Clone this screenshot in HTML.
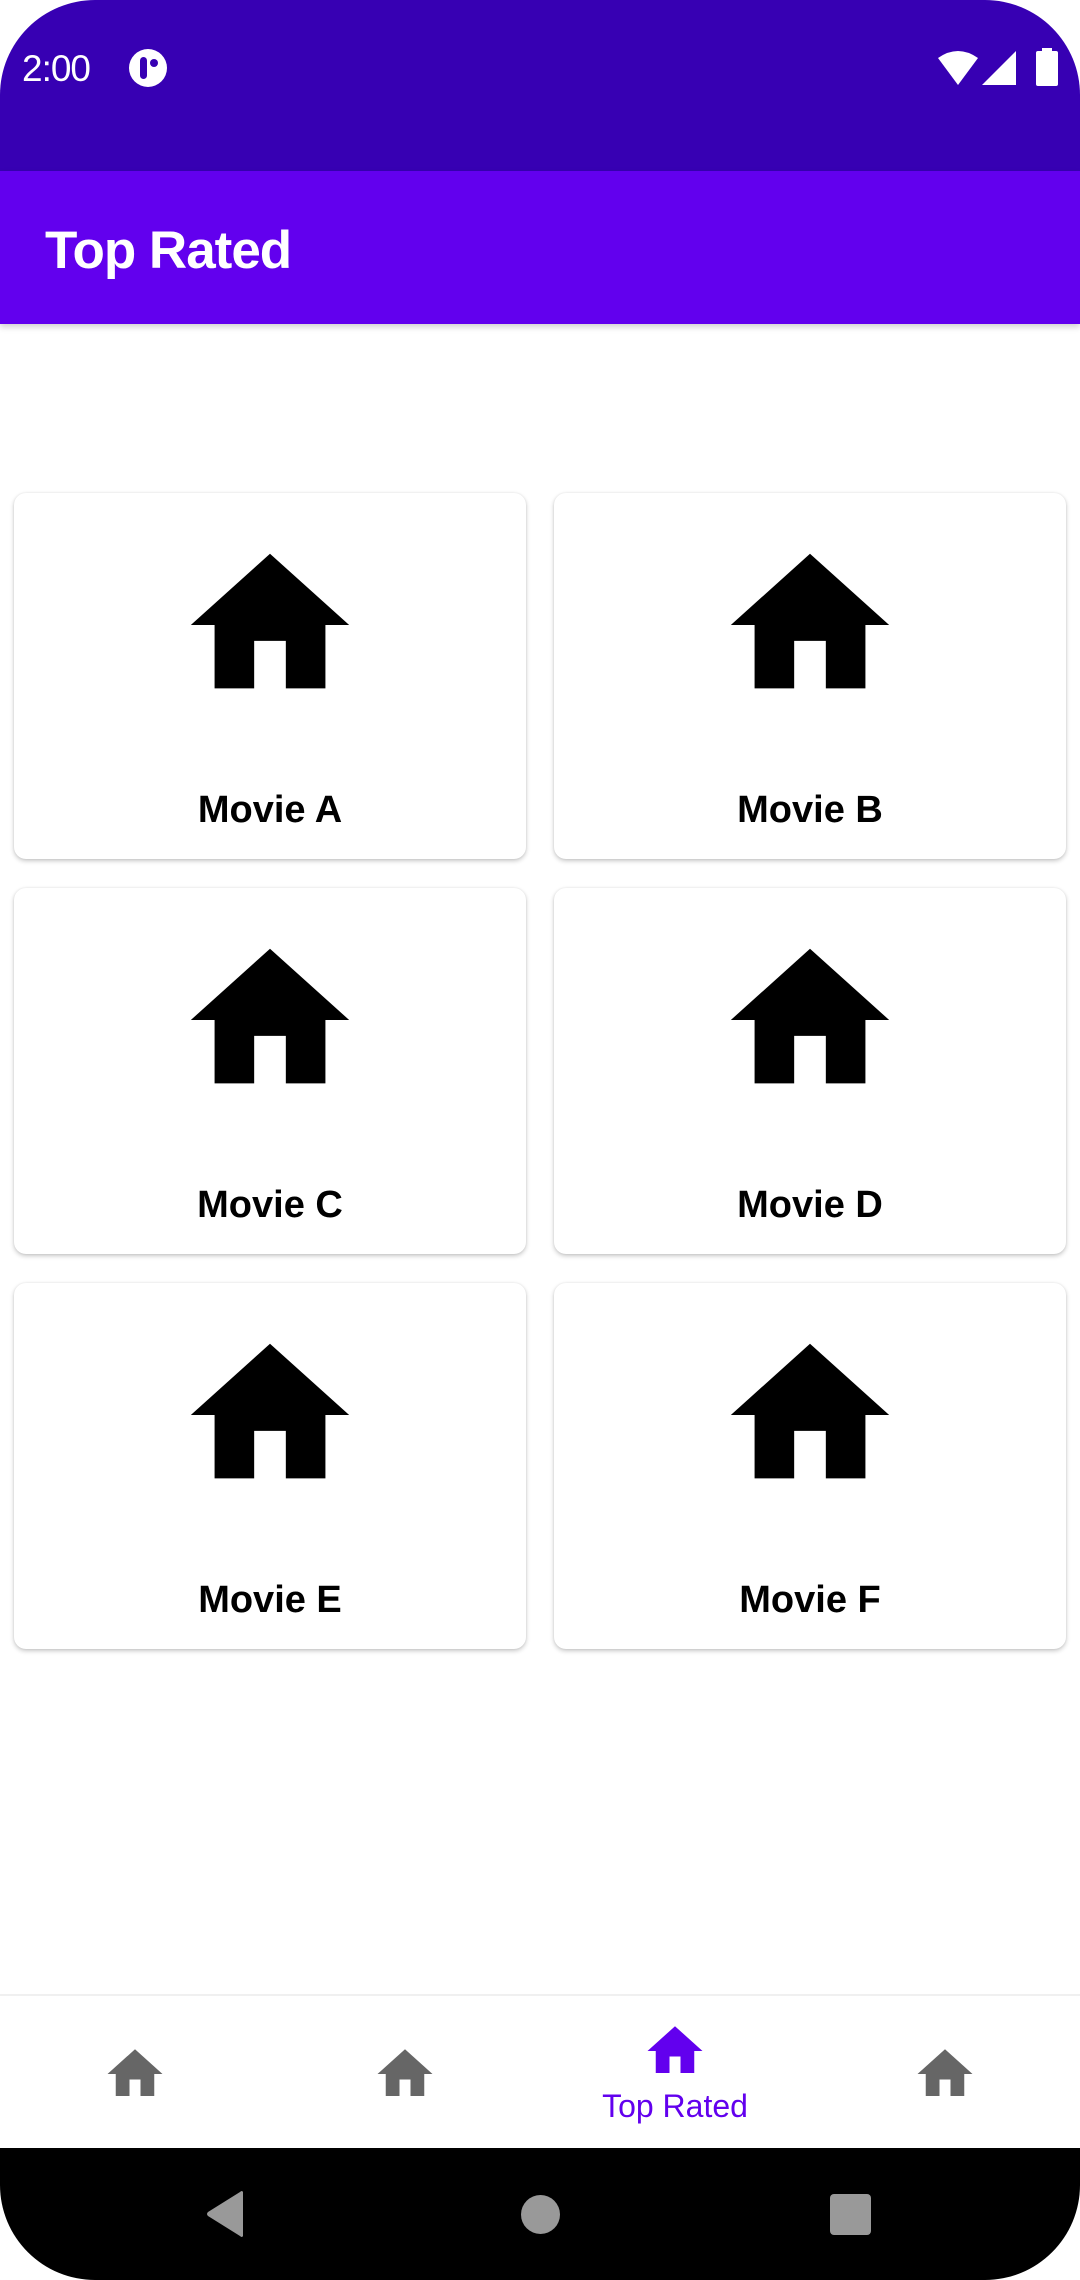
<!DOCTYPE html>
<html><head><meta charset="utf-8"><style>
*{margin:0;padding:0;box-sizing:border-box}
body{width:1080px;height:2280px;overflow:hidden;background:#fff;font-family:"Liberation Sans",Roboto,sans-serif;position:relative}
.frame{position:absolute;left:0;top:0;width:1080px;height:2280px;border-radius:95px;overflow:hidden;background:#fff}
.status{position:absolute;left:0;top:0;width:1080px;height:171px;background:#3700B3}
.app{position:absolute;left:0;top:171px;width:1080px;height:153px;background:#6200EE;box-shadow:0 3px 6px rgba(0,0,0,.18)}
.app span{position:absolute;left:45px;top:49px;color:#fff;font-size:53px;font-weight:bold;letter-spacing:-1px}
.time{position:absolute;left:22px;top:48px;color:#fff;font-size:37px;letter-spacing:-1px}
.card{position:absolute;width:512px;height:366px;background:#fff;border-radius:12px;box-shadow:0 2px 5px rgba(0,0,0,.22),0 0 2px rgba(0,0,0,.08)}
.card svg{position:absolute;left:161px;top:37px;width:190px;height:190px}
.card div{position:absolute;left:0;right:0;top:296px;text-align:center;font-size:38px;font-weight:bold;color:#000}
.nav{position:absolute;left:0;top:1994px;width:1080px;height:154px;background:#fff;border-top:2px solid #f0f0f0}
.nav svg{position:absolute;width:66px;height:66px}
.sys{position:absolute;left:0;top:2148px;width:1080px;height:132px;background:#000}
</style></head><body><div class="frame">
<div class="status">
<div class="time">2:00</div>
<svg style="position:absolute;left:128px;top:48px" width="40" height="40" viewBox="0 0 40 40"><circle cx="20" cy="20" r="19" fill="#fff"/><rect x="12" y="9" width="7" height="22" rx="3.5" fill="#3700B3"/><circle cx="26" cy="15" r="4" fill="#3700B3"/></svg>
<svg style="position:absolute;left:936px;top:50px" width="44" height="36" viewBox="0 0 44 36"><path d="M22 35 L2 8 Q22 -6 42 8 Z" fill="#fff"/></svg>
<svg style="position:absolute;left:982px;top:50px" width="36" height="36" viewBox="0 0 36 36"><path d="M0 35 L34 1 L34 35 Z" fill="#fff"/></svg>
<svg style="position:absolute;left:1036px;top:48px" width="22" height="38" viewBox="0 0 22 38"><rect x="6" y="0" width="10" height="4" fill="#fff"/><rect x="0" y="3" width="22" height="35" rx="2" fill="#fff"/></svg>
</div>
<div class="app"><span>Top Rated</span></div>

<div class="card" style="left:14px;top:493px"><svg viewBox="0 0 24 24"><path d="M10 20v-6h4v6h5v-8h3L12 3 2 12h3v8z"/></svg><div>Movie A</div></div>
<div class="card" style="left:554px;top:493px"><svg viewBox="0 0 24 24"><path d="M10 20v-6h4v6h5v-8h3L12 3 2 12h3v8z"/></svg><div>Movie B</div></div>
<div class="card" style="left:14px;top:888px"><svg viewBox="0 0 24 24"><path d="M10 20v-6h4v6h5v-8h3L12 3 2 12h3v8z"/></svg><div>Movie C</div></div>
<div class="card" style="left:554px;top:888px"><svg viewBox="0 0 24 24"><path d="M10 20v-6h4v6h5v-8h3L12 3 2 12h3v8z"/></svg><div>Movie D</div></div>
<div class="card" style="left:14px;top:1283px"><svg viewBox="0 0 24 24"><path d="M10 20v-6h4v6h5v-8h3L12 3 2 12h3v8z"/></svg><div>Movie E</div></div>
<div class="card" style="left:554px;top:1283px"><svg viewBox="0 0 24 24"><path d="M10 20v-6h4v6h5v-8h3L12 3 2 12h3v8z"/></svg><div>Movie F</div></div>

<div class="nav">
<svg style="left:102px;top:45px" viewBox="0 0 24 24"><path fill="#666" d="M10 20v-6h4v6h5v-8h3L12 3 2 12h3v8z"/></svg>
<svg style="left:372px;top:45px" viewBox="0 0 24 24"><path fill="#666" d="M10 20v-6h4v6h5v-8h3L12 3 2 12h3v8z"/></svg>
<svg style="left:642px;top:22px" viewBox="0 0 24 24"><path fill="#6200EE" d="M10 20v-6h4v6h5v-8h3L12 3 2 12h3v8z"/></svg>
<div style="position:absolute;left:575px;width:200px;top:92px;text-align:center;color:#6200EE;font-size:32px">Top Rated</div>
<svg style="left:912px;top:45px" viewBox="0 0 24 24"><path fill="#666" d="M10 20v-6h4v6h5v-8h3L12 3 2 12h3v8z"/></svg>
</div>
<div class="sys">
<svg style="position:absolute;left:205px;top:42px" width="42" height="48" viewBox="0 0 42 48"><path d="M38 2 L38 46 Q37 48 35 46 L3 26 Q1 24 3 22 L35 2 Q37 0 38 2 Z" fill="#999"/></svg>
<div style="position:absolute;left:521px;top:47px;width:39px;height:39px;border-radius:50%;background:#999"></div>
<div style="position:absolute;left:830px;top:46px;width:41px;height:41px;border-radius:4px;background:#999"></div>
</div>
</div></body></html>
